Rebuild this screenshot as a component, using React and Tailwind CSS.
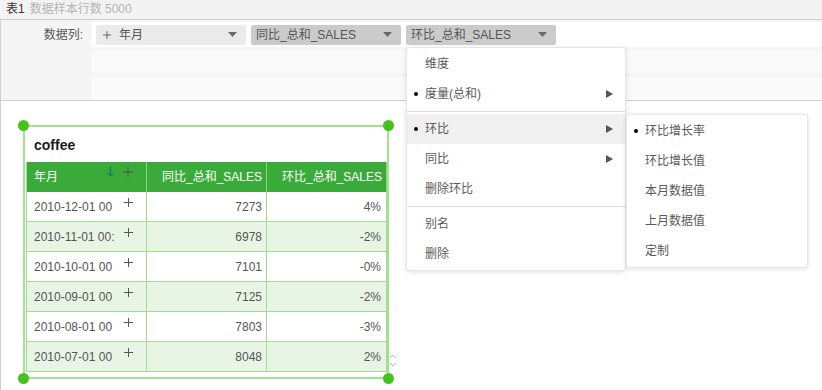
import React from "react";

const rows = [
  ["2010-12-01 00", "7273", "4%"],
  ["2010-11-01 00:", "6978", "-2%"],
  ["2010-10-01 00", "7101", "-0%"],
  ["2010-09-01 00", "7125", "-2%"],
  ["2010-08-01 00", "7803", "-3%"],
  ["2010-07-01 00", "8048", "2%"],
];

const menuItems = [
  { label: "维度" },
  { label: "度量(总和)", dot: true, arrow: true },
  { divider: true },
  { label: "环比", dot: true, arrow: true, active: true },
  { label: "同比", arrow: true },
  { label: "删除环比" },
  { divider: true },
  { label: "别名" },
  { label: "删除" },
];

const subItems = [
  { label: "环比增长率", dot: true },
  { label: "环比增长值" },
  { label: "本月数据值" },
  { label: "上月数据值" },
  { label: "定制" },
];

function Caret() {
  return (
    <svg width="9" height="5" viewBox="0 0 9 5" className="shrink-0">
      <polygon points="0,0 9,0 4.5,5" fill="#6a6a6a" />
    </svg>
  );
}

function Plus({ color = "#555", size = 9, width = 1 }) {
  return (
    <svg width={size} height={size} viewBox="0 0 9 9" className="shrink-0">
      <path d="M4.5 0V9M0 4.5H9" stroke={color} strokeWidth={width} />
    </svg>
  );
}

function Arrow() {
  return (
    <svg width="7" height="8" viewBox="0 0 7 8" className="shrink-0">
      <polygon points="0,0 7,4 0,8" fill="#555" />
    </svg>
  );
}

function Chip({ label, light, plus }) {
  return (
    <div
      className={`w-[150px] h-[20px] rounded-[2px] flex items-center pl-[5px] pr-[9px] text-[12px] text-[#555] ${
        light ? "bg-[#ebebeb]" : "bg-[#cbcbcb]"
      }`}
    >
      {plus && (
        <span className="mr-[8px] ml-[2px] flex">
          <Plus color="#555" size={8} />
        </span>
      )}
      <span className="truncate">{label}</span>
      <span className="ml-auto">
        <Caret />
      </span>
    </div>
  );
}

function Menu({ items, className }) {
  return (
    <div
      className={`absolute bg-white rounded-[3px] border border-[#e6e6e6] shadow-[0_1px_5px_rgba(0,0,0,0.12)] py-[1px] text-[12px] text-[#5a5a5a] ${className}`}
    >
      {items.map((it, i) =>
        it.divider ? (
          <div key={i} className="h-px bg-[#dcdcdc] my-[2px]" />
        ) : (
          <div
            key={i}
            className={`h-[30px] flex items-center pl-[7px] pr-[12px] ${it.active ? "bg-[#f0f0f0]" : ""}`}
          >
            <span className="w-[11px] flex">
              {it.dot && <span className="w-[4px] h-[4px] rounded-full bg-black" />}
            </span>
            <span>{it.label}</span>
            {it.arrow && (
              <span className="ml-auto flex">
                <Arrow />
              </span>
            )}
          </div>
        )
      )}
    </div>
  );
}

export default function App() {
  return (
    <div className="relative w-[822px] h-[390px] overflow-hidden bg-white flex flex-col font-['Liberation_Sans','Noto_Sans_CJK_SC',sans-serif]">
      {/* top bar */}
      <div className="h-[20px] shrink-0 bg-[#f3f3f3] border-b border-[#cfcfcf] flex items-center pl-[6px] text-[12px] pb-[2px]">
        <span className="text-[#333]">表1</span>
        <span className="ml-[5px] text-[#b3b3b3]">数据样本行数 5000</span>
      </div>

      {/* data column panel */}
      <div className="h-[81px] shrink-0 bg-[#f5f5f5] border-b border-l border-[#d0d0d0] flex">
        <div className="w-[90px] shrink-0 text-right pr-[8px] pt-[6px] text-[12px] text-[#555]">数据列:</div>
        <div className="flex-1 flex flex-col pt-[2px]">
          <div className="h-[25px] bg-white flex items-center gap-[5px] pl-[5px]">
            <Chip label="年月" light plus />
            <Chip label="同比_总和_SALES" />
            <Chip label="环比_总和_SALES" />
          </div>
          <div className="h-[23px] bg-[#fafafa] mt-[3px]" />
          <div className="h-[23px] bg-[#fafafa] mt-[4px]" />
        </div>
      </div>

      {/* canvas */}
      <div className="flex-1 border-l border-[#d0d0d0] pl-[22px] pt-[24px]">
        <div className="relative w-[366px] h-[254px] border-2 border-[#a2e28e]">
          <span className="absolute -left-[7px] -top-[7px] w-[11px] h-[11px] rounded-full bg-[#45c21c]" />
          <span className="absolute -right-[7px] -top-[7px] w-[11px] h-[11px] rounded-full bg-[#45c21c]" />
          <span className="absolute -left-[7px] -bottom-[7px] w-[11px] h-[11px] rounded-full bg-[#45c21c]" />
          <span className="absolute -right-[7px] -bottom-[7px] w-[11px] h-[11px] rounded-full bg-[#45c21c]" />

          <div className="h-[35px] pl-[9px] pt-[8px] text-[14px] leading-[20px] font-bold text-[#1a1a1a]">coffee</div>

          <div className="ml-[1px] w-[361px] border-l border-[#a3dc91] text-[12px]">
            {/* header */}
            <div className="flex h-[30px] bg-[#3aab3a] text-white">
              <div className="w-[120px] border-r border-[#8fd37e] flex items-center pl-[7px]">
                <span>年月</span>
                <div className="ml-auto mr-[13px] self-start mt-[4px] flex items-start gap-[9px]">
                  <svg width="7" height="11" viewBox="0 0 7 11">
                    <path d="M3.5 0V10M0.5 7L3.5 10L6.5 7" stroke="#22805e" strokeWidth="1.4" fill="none" />
                  </svg>
                  <span className="mt-[1px] flex">
                    <Plus color="#3f6f3f" size={10} width={1.2} />
                  </span>
                </div>
              </div>
              <div className="w-[120px] border-r border-[#8fd37e] flex items-center justify-end pr-[4px]">同比_总和_SALES</div>
              <div className="w-[120px] border-r border-[#8fd37e] flex items-center justify-end pr-[4px]">环比_总和_SALES</div>
            </div>
            {/* body */}
            {rows.map((r, i) => (
              <div
                key={i}
                className={`flex h-[30px] border-b border-[#a3dc91] text-[#555] ${i % 2 ? "bg-[#e8f5e5]" : "bg-white"}`}
              >
                <div className="w-[120px] border-r border-[#a3dc91] flex items-center pl-[7px]">
                  <span className="w-[82px] overflow-hidden whitespace-nowrap">{r[0]}</span>
                  <span className="ml-[8px] self-start mt-[6px] flex">
                    <Plus />
                  </span>
                </div>
                <div className="w-[120px] border-r border-[#a3dc91] flex items-center justify-end pr-[4px]">{r[1]}</div>
                <div className="w-[120px] border-r border-[#a3dc91] flex items-center justify-end pr-[5px]">{r[2]}</div>
              </div>
            ))}
          </div>

          <svg className="absolute -right-[10px] bottom-[10px]" width="8" height="13" viewBox="0 0 8 13">
            <path d="M1 4L4 1L7 4M1 9L4 12L7 9" stroke="#bdbdbd" strokeWidth="1" fill="none" />
          </svg>
        </div>
      </div>

      <Menu items={menuItems} className="left-[406px] top-[47px] w-[220px]" />
      <Menu items={subItems} className="left-[626px] top-[114px] w-[182px]" />
    </div>
  );
}
